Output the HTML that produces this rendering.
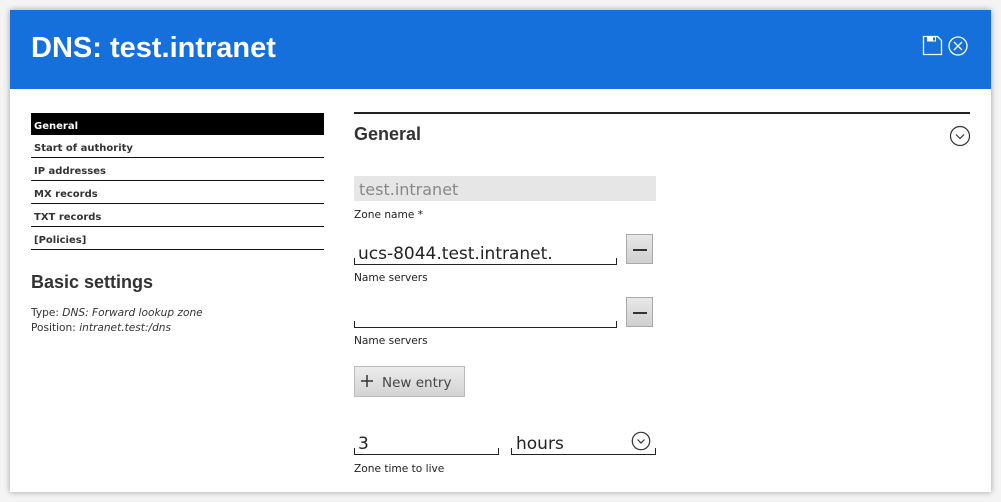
<!DOCTYPE html>
<html><head><style>
*{margin:0;padding:0;box-sizing:border-box}
body{width:1001px;height:502px;background:#f4f4f4;font-family:"DejaVu Sans","Liberation Sans",sans-serif;position:relative;overflow:hidden;color:#222}
.dlg{position:absolute;left:10px;top:10px;width:981px;height:482px;background:#fff;box-shadow:0 0 6px rgba(0,0,0,.35)}
.hd{position:absolute;left:0;top:0;width:981px;height:79px;background:#1670dc}
.hd h1{position:absolute;left:21px;top:22px;font-family:"Liberation Sans",sans-serif;font-size:29px;font-weight:bold;color:#fff}
.a{position:absolute}
.nav{position:absolute;left:21px;top:103px;width:293px}
.nav div{height:23px;font-size:10px;font-weight:bold;color:#333;padding:9px 0 0 3px;border-bottom:1.5px solid #111;line-height:10px}
.nav div.sel{background:#000;color:#fff;border:none;height:22px}
.lbl{font-size:10.6px;color:#222}
.line{position:absolute;height:7px;border:1.5px solid #222;border-top:none}
.btn{position:absolute;width:27px;height:30px;background:linear-gradient(#e8e8e8,#cfcfcf);border:1px solid #aaa}
.btn:after{content:"";position:absolute;left:6px;top:14px;width:14px;height:2px;background:#333}
.h2{position:absolute;font-family:"Liberation Sans",sans-serif;font-size:18px;font-weight:bold;color:#333}
</style></head><body>
<div class="dlg">
<div class="hd"><h1>DNS: test.intranet</h1>
<svg class="a" style="left:912px;top:25px" width="48" height="22" viewBox="0 0 48 22">
<path d="M1.5 1.5h14l4 4v14h-18z" fill="none" stroke="#fff" stroke-width="1.3"/>
<rect x="5" y="1.5" width="9" height="5" fill="#fff"/><rect x="11" y="2.5" width="2" height="3" fill="#1670dc"/>
<circle cx="36" cy="11" r="9" fill="none" stroke="#fff" stroke-width="1.3"/>
<path d="M32 7l8 8M40 7l-8 8" stroke="#fff" stroke-width="1.3"/>
</svg></div>
<div class="nav">
<div class="sel">General</div><div>Start of authority</div><div>IP addresses</div><div>MX records</div><div>TXT records</div><div>[Policies]</div>
</div>
<div class="h2" style="left:21px;top:262px">Basic settings</div>
<div class="a lbl" style="left:21px;top:296px;line-height:15px;color:#333">Type: <i>DNS: Forward lookup zone</i><br>Position: <i>intranet.test:/dns</i></div>

<div class="a" style="left:344px;top:102px;width:616px;height:2px;background:#222"></div>
<div class="h2" style="left:344px;top:114px">General</div>
<svg class="a" style="left:939px;top:115px" width="22" height="22" viewBox="0 0 22 22"><circle cx="11" cy="11" r="9.5" fill="none" stroke="#333" stroke-width="1.2"/><path d="M7 9.5l4 4 4-4" fill="none" stroke="#333" stroke-width="1.2"/></svg>

<div class="a" style="left:344px;top:166px;width:302px;height:25px;background:#e6e6e6;font-size:16px;color:#888;padding:4px 0 0 5px">test.intranet</div>
<div class="a lbl" style="left:344px;top:199px">Zone name *</div>

<div class="a" style="left:348px;top:234px;font-size:17px;color:#222">ucs-8044.test.intranet.</div>
<div class="line" style="left:344px;top:248px;width:263px"></div>
<div class="btn" style="left:616px;top:224px"></div>
<div class="a lbl" style="left:344px;top:262px">Name servers</div>

<div class="line" style="left:344px;top:311px;width:263px"></div>
<div class="btn" style="left:616px;top:287px"></div>
<div class="a lbl" style="left:344px;top:325px">Name servers</div>

<div class="a" style="left:344px;top:356px;width:111px;height:31px;background:linear-gradient(#ececec,#d3d3d3);border:1px solid #bbb;font-size:13.5px;color:#444;padding:8px 0 0 27px">New entry</div>
<svg class="a" style="left:350px;top:364px" width="14" height="14"><path d="M7 1v12M1 7h12" stroke="#333" stroke-width="1.5"/></svg>

<div class="a" style="left:348px;top:424px;font-size:17px;color:#222">3</div>
<div class="line" style="left:344px;top:438px;width:145px"></div>
<div class="a" style="left:506px;top:424px;font-size:17px;color:#222">hours</div>
<div class="line" style="left:501px;top:438px;width:145px"></div>
<svg class="a" style="left:621px;top:421px" width="20" height="20" viewBox="0 0 20 20"><circle cx="10" cy="10" r="8.7" fill="none" stroke="#333" stroke-width="1.2"/><path d="M6.5 8.5l3.5 3.5 3.5-3.5" fill="none" stroke="#333" stroke-width="1.2"/></svg>
<div class="a lbl" style="left:344px;top:453px">Zone time to live</div>
</div>
</body></html>
